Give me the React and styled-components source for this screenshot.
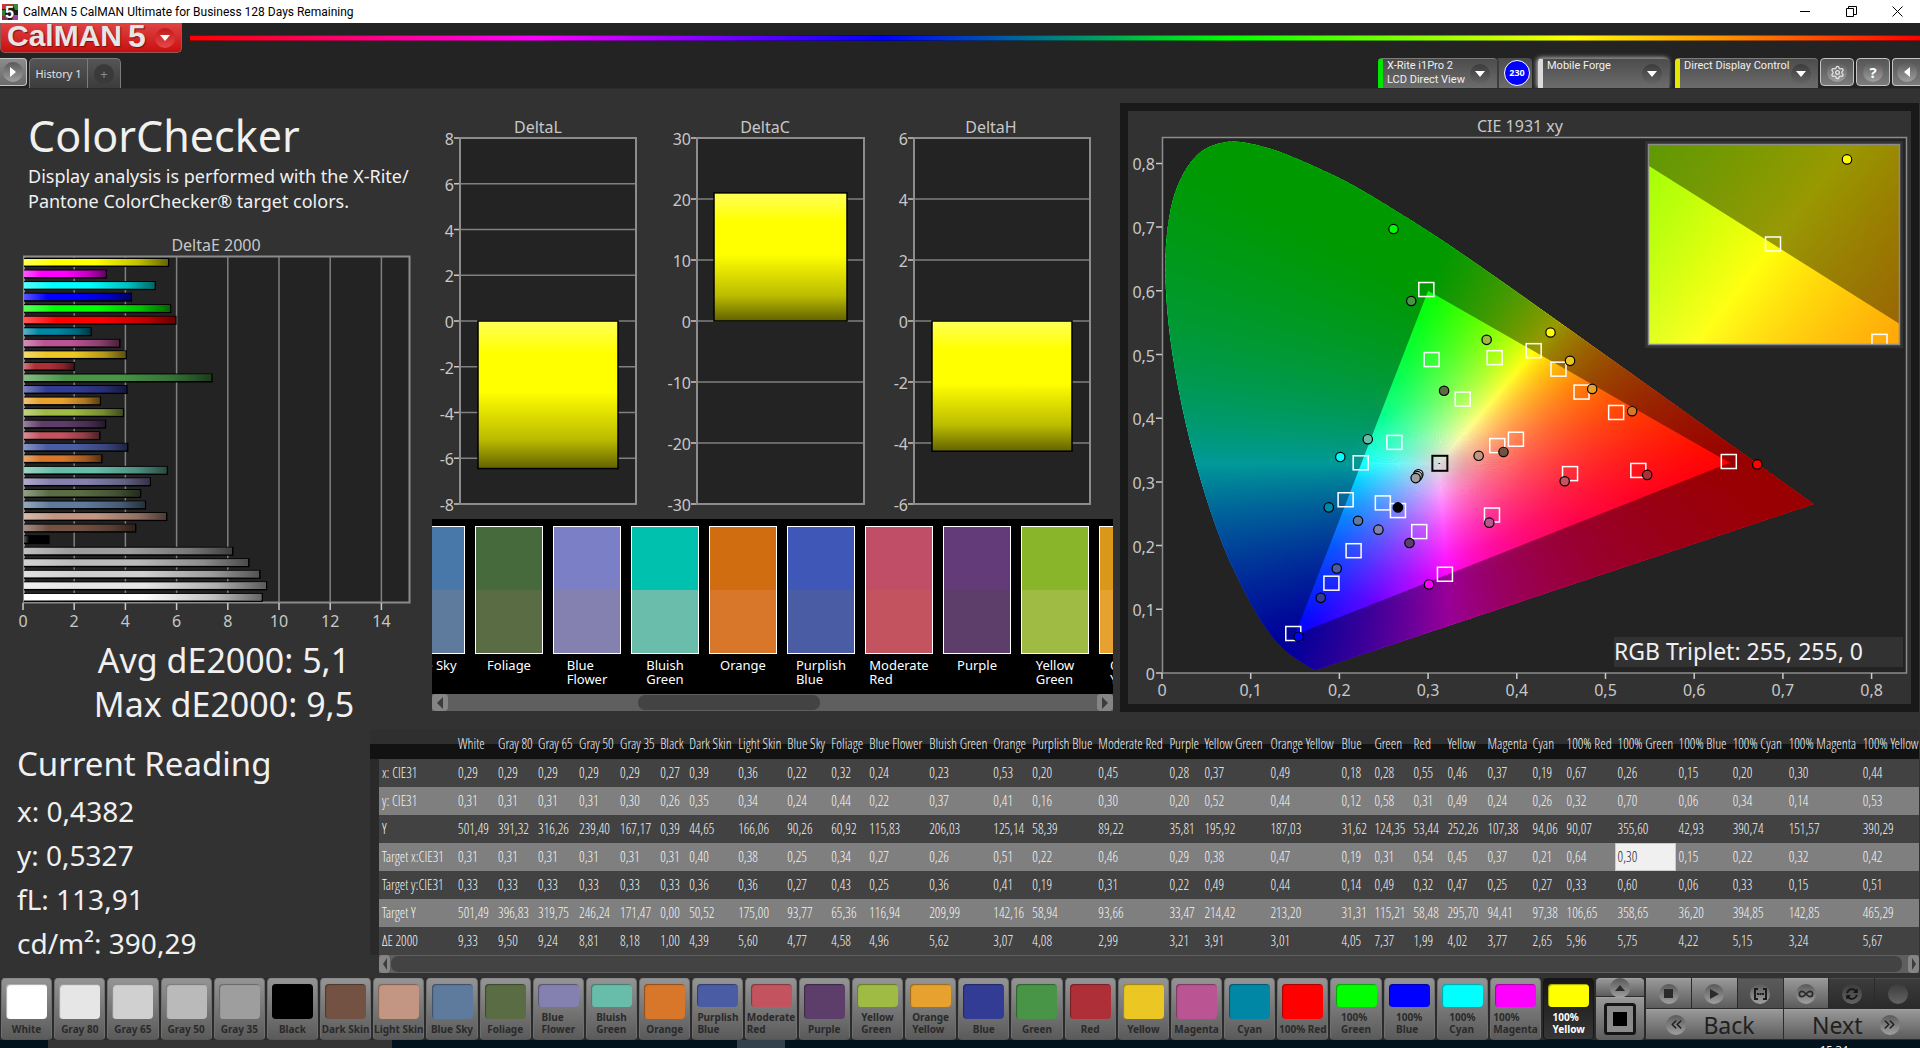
import React from "react";
import styled, { createGlobalStyle, css } from "styled-components";
import { ChevronsLeft, ChevronsRight, Infinity as Loop, Settings } from "lucide-react";
import { FaSyncAlt } from "react-icons/fa";

const UI_FONT = '"Noto Sans", "Open Sans", sans-serif';

// name, patch colour, deltaE, x, y, Y, target x, target y, target Y, column width
const PATCHES = [
    ["White", "#ffffff", "9,33", "0,29", "0,31", "501,49", "0,31", "0,33", "501,49", 40],
    ["Gray 80", "#e6e6e6", "9,50", "0,29", "0,31", "391,32", "0,31", "0,33", "396,83", 40],
    ["Gray 65", "#d0d0d0", "9,24", "0,29", "0,31", "316,26", "0,31", "0,33", "319,75", 41],
    ["Gray 50", "#bababa", "8,81", "0,29", "0,31", "239,40", "0,31", "0,33", "246,24", 41],
    ["Gray 35", "#9e9e9e", "8,18", "0,29", "0,30", "167,17", "0,31", "0,33", "171,47", 40],
    ["Black", "#000000", "1,00", "0,27", "0,26", "0,39", "0,31", "0,33", "0,00", 29],
    ["Dark Skin", "#735244", "4,39", "0,39", "0,35", "44,65", "0,40", "0,36", "50,52", 49],
    ["Light Skin", "#c29682", "5,60", "0,36", "0,34", "166,06", "0,38", "0,36", "175,00", 49],
    ["Blue Sky", "#5e7a9c", "4,77", "0,22", "0,24", "90,26", "0,25", "0,27", "93,77", 44],
    ["Foliage", "#596c43", "4,58", "0,32", "0,44", "60,92", "0,34", "0,43", "65,36", 38],
    ["Blue Flower", "#8480af", "4,96", "0,24", "0,22", "115,83", "0,27", "0,25", "116,94", 60],
    ["Bluish Green", "#67bda9", "5,62", "0,23", "0,37", "206,03", "0,26", "0,36", "209,99", 64],
    ["Orange", "#d87729", "3,07", "0,53", "0,41", "125,14", "0,51", "0,41", "142,16", 39],
    ["Purplish Blue", "#4a5ca4", "4,08", "0,20", "0,16", "58,39", "0,22", "0,19", "58,94", 66],
    ["Moderate Red", "#c2535f", "2,99", "0,45", "0,30", "89,22", "0,46", "0,31", "93,66", 71],
    ["Purple", "#5d3d69", "3,21", "0,28", "0,20", "35,81", "0,29", "0,22", "33,47", 35],
    ["Yellow Green", "#9fbb43", "3,91", "0,37", "0,52", "195,92", "0,38", "0,49", "214,42", 66],
    ["Orange Yellow", "#e7a12f", "3,01", "0,49", "0,44", "187,03", "0,47", "0,44", "213,20", 71],
    ["Blue", "#333c95", "4,05", "0,18", "0,12", "31,62", "0,19", "0,14", "31,31", 33],
    ["Green", "#489547", "7,37", "0,28", "0,58", "124,35", "0,31", "0,49", "115,21", 39],
    ["Red", "#af2f38", "1,99", "0,55", "0,31", "53,44", "0,54", "0,32", "58,48", 34],
    ["Yellow", "#ecc723", "4,02", "0,46", "0,49", "252,26", "0,45", "0,47", "295,70", 40],
    ["Magenta", "#ba5492", "3,77", "0,37", "0,24", "107,38", "0,37", "0,25", "94,41", 45],
    ["Cyan", "#0087a6", "2,65", "0,19", "0,26", "94,06", "0,21", "0,27", "97,38", 34],
    ["100% Red", "#ff0000", "5,96", "0,67", "0,32", "90,07", "0,64", "0,33", "106,65", 51],
    ["100% Green", "#00ff00", "5,75", "0,26", "0,70", "355,60", "0,30", "0,60", "358,65", 61],
    ["100% Blue", "#0000ff", "4,22", "0,15", "0,06", "42,93", "0,15", "0,06", "36,20", 54],
    ["100% Cyan", "#00ffff", "5,15", "0,20", "0,34", "390,74", "0,22", "0,33", "394,85", 56],
    ["100% Magenta", "#ff00ff", "3,24", "0,30", "0,14", "151,57", "0,32", "0,15", "142,85", 74],
    ["100% Yellow", "#ffff00", "5,67", "0,44", "0,53", "390,29", "0,42", "0,51", "465,29", 59],
].map(([name, color, dE, x, y, Y, tx, ty, tY, width]) => ({ name, color, dE, x, y, Y, tx, ty, tY, width }));

const ROWS = [
    ["x: CIE31", "x"],
    ["y: CIE31", "y"],
    ["Y", "Y"],
    ["Target x:CIE31", "tx"],
    ["Target y:CIE31", "ty"],
    ["Target Y", "tY"],
    ["ΔE 2000", "dE"],
];

const COMPARE = [
    ["Blue Sky", "#4878aa", "#5e7a9c"],
    ["Foliage", "#476a3d", "#596c43"],
    ["Blue Flower", "#7a7fc6", "#8480af"],
    ["Bluish Green", "#00c1ae", "#69bdaa"],
    ["Orange", "#d06d11", "#d87729"],
    ["Purplish Blue", "#3f58b8", "#4a5ca4"],
    ["Moderate Red", "#c04e66", "#c2535f"],
    ["Purple", "#633b79", "#5d3d69"],
    ["Yellow Green", "#88b529", "#9fbb43"],
    ["Orange Yellow", "#db9719", "#e7a12f"],
];

const toNumber = (text) => parseFloat(text.replace(",", "."));

/* ---------- DeltaE bar chart ---------- */

const DeltaEChart = () => {
    const x0 = 23;
    const unit = 25.6;
    const bars = [...PATCHES].reverse();
    return (
        <Chart viewBox="0 0 432 424" role="img" aria-label="DeltaE 2000">
            <defs>
                <linearGradient id="shade">
                    <stop offset="0" stopColor="#fff" stopOpacity="0.35" />
                    <stop offset="0.22" stopColor="#fff" stopOpacity="0" />
                    <stop offset="0.5" stopColor="#000" stopOpacity="0" />
                    <stop offset="0.8" stopColor="#000" stopOpacity="0.25" />
                    <stop offset="1" stopColor="#000" stopOpacity="0.6" />
                </linearGradient>
            </defs>
            <AxisText x="216" y="37" textAnchor="middle">DeltaE 2000</AxisText>
            <rect x="24" y="42.5" width="385.5" height="346" fill="#232323" stroke="#8c8c8c" strokeWidth="2" />
            {[0, 2, 4, 6, 8, 10, 12, 14].map((v) => (
                <g key={v}>
                    {v > 0 && <path d={`M${x0 + v * unit} 43V388`} stroke="#808080" strokeWidth="1.5" />}
                    <path d={`M${x0 + v * unit} 389v7`} stroke="#c8c8c8" strokeWidth="1.5" />
                    <AxisText x={x0 + v * unit} y="413" textAnchor="middle">{v}</AxisText>
                </g>
            ))}
            {bars.map((p, i) => {
                const y = 44 + i * 11.55;
                const w = toNumber(p.dE) * unit;
                return (
                    <g key={p.name}>
                        <rect x={x0 + 1} y={y} width={w} height="9" fill="#000" />
                        <rect x={x0 + 1} y={y + 1} width={w - 1.5} height="6.5" fill={p.color} />
                        <rect x={x0 + 1} y={y + 1} width={w - 1.5} height="6.5" fill="url(#shade)" />
                    </g>
                );
            })}
        </Chart>
    );
};

/* ---------- DeltaL / DeltaC / DeltaH ---------- */

const DeltaChart = ({ title, size, left, right, bar, max, step, value }) => {
    const top = 49;
    const bottom = 415;
    const toY = (v) => top + ((max - v) / (2 * max)) * (bottom - top);
    const ticks = [];
    for (let v = max; v >= -max; v -= step) ticks.push(v);
    const y1 = Math.min(toY(value), toY(0));
    const h = Math.abs(toY(value) - toY(0));
    return (
        <Chart viewBox={`0 0 ${size} 430`} role="img" aria-label={title}>
            <defs>
                <linearGradient id={"fill" + title} x1="0" y1="0" x2="0" y2="1">
                    <stop offset="0" stopColor="#ffff58" />
                    <stop offset="0.22" stopColor="#ffff00" />
                    <stop offset="0.48" stopColor="#ffff00" />
                    <stop offset="0.8" stopColor="#bcbc00" />
                    <stop offset="1" stopColor="#626200" />
                </linearGradient>
            </defs>
            <AxisText x={size / 2} y="44" textAnchor="middle">{title}</AxisText>
            <rect x={left} y={top} width={right - left} height={bottom - top} fill="#232323" />
            {ticks.map((v) => (
                <g key={v}>
                    <path d={`M${left} ${toY(v)}H${right}`} stroke="#808080" strokeWidth="1.5" />
                    <path d={`M${left - 6} ${toY(v)}h6`} stroke="#c8c8c8" strokeWidth="1.5" />
                    <AxisText x={left - 6} y={toY(v) + 7} textAnchor="end">{v}</AxisText>
                </g>
            ))}
            <rect x={left} y={top} width={right - left} height={bottom - top} fill="none" stroke="#8c8c8c" strokeWidth="2" />
            <rect x={bar} y={y1} width={right - (bar - left) - bar} height={h} fill={`url(#fill${title})`} stroke="#000" strokeWidth="1.5" />
        </Chart>
    );
};

/* ---------- CIE chromaticity ---------- */

const LOCUS = [
    [0.1741, 0.005], [0.1726, 0.0048], [0.1689, 0.0069], [0.1644, 0.0109], [0.1566, 0.0177], [0.144, 0.0297],
    [0.1355, 0.0399], [0.1241, 0.0578], [0.1096, 0.0868], [0.0913, 0.1327], [0.0687, 0.2007], [0.0454, 0.295],
    [0.0235, 0.4127], [0.0082, 0.5384], [0.0039, 0.6548], [0.0139, 0.7502], [0.0389, 0.812], [0.0743, 0.8338],
    [0.1142, 0.8262], [0.1547, 0.8059], [0.1929, 0.7816], [0.2296, 0.7543], [0.3016, 0.6923], [0.3731, 0.6245],
    [0.4441, 0.5547], [0.5125, 0.4866], [0.5752, 0.4242], [0.627, 0.3725], [0.6658, 0.334], [0.6915, 0.3083],
    [0.719, 0.2809], [0.7347, 0.2653],
];

const WHITE = [0.3127, 0.329];
const GAMUT = "M0.3 0.6L0.64 0.33L0.15 0.06Z";
const DIST = [0, 0.03, 0.06, 0.1, 0.14, 0.18, 0.23, 0.29, 0.36, 0.46, 0.6];

// Catmull-Rom through the spectral points, closed by the purple line
const locusPath = () => {
    let d = `M${LOCUS[0][0]} ${LOCUS[0][1]}`;
    for (let i = 0; i < LOCUS.length - 1; i++) {
        const p0 = LOCUS[Math.max(i - 1, 0)];
        const p1 = LOCUS[i];
        const p2 = LOCUS[i + 1];
        const p3 = LOCUS[Math.min(i + 2, LOCUS.length - 1)];
        const c1 = [p1[0] + (p2[0] - p0[0]) / 6, p1[1] + (p2[1] - p0[1]) / 6];
        const c2 = [p2[0] - (p3[0] - p1[0]) / 6, p2[1] - (p3[1] - p1[1]) / 6];
        d += `C${c1.join(" ")} ${c2.join(" ")} ${p2.join(" ")}`;
    }
    return d + "Z";
};
const LOCUS_PATH = locusPath();

const xyToRgb = (x, y) => {
    const z = 1 - x - y;
    const rgb = [
        3.2406 * x - 1.5372 * y - 0.4986 * z,
        -0.9689 * x + 1.8758 * y + 0.0415 * z,
        0.0557 * x - 0.204 * y + 1.057 * z,
    ].map((c) => Math.max(c, 0));
    const top = Math.max(...rgb);
    return `rgb(${rgb.map((c) => Math.round((c / top) * 255)).join(",")})`;
};

// Thin wedges round the white point, each one graded along its own ray
const Fan = ({ id, from, to, step }) => {
    const wedges = [];
    const reach = DIST[DIST.length - 1];
    const at = (deg, r) => {
        const a = (deg * Math.PI) / 180;
        return [WHITE[0] + Math.cos(a) * r, WHITE[1] + Math.sin(a) * r];
    };
    for (let deg = from; deg < to; deg += step) {
        const gid = id + wedges.length;
        const mid = deg + step / 2;
        const [x2, y2] = at(mid, reach);
        wedges.push(
            <g key={gid}>
                <linearGradient id={gid} gradientUnits="userSpaceOnUse" x1={WHITE[0]} y1={WHITE[1]} x2={x2} y2={y2}>
                    {DIST.map((r) => (
                        <stop key={r} offset={r / reach} stopColor={xyToRgb(...at(mid, r))} />
                    ))}
                </linearGradient>
                <path
                    d={`M${WHITE.join(" ")}L${at(deg, reach).join(" ")}L${at(deg + step * 1.8, reach).join(" ")}Z`}
                    fill={`url(#${gid})`}
                />
            </g>
        );
    }
    return (
        <g clipPath="url(#locus)">
            {wedges}
            <path d={LOCUS_PATH + GAMUT} fillRule="evenodd" fill="#000" opacity="0.4" />
        </g>
    );
};

const TARGETS = [
    [0.298, 0.602], [0.304, 0.492], [0.375, 0.495], [0.419, 0.506], [0.447, 0.477], [0.473, 0.441],
    [0.512, 0.409], [0.339, 0.43], [0.262, 0.362], [0.224, 0.33], [0.378, 0.357], [0.399, 0.367],
    [0.46, 0.313], [0.537, 0.318], [0.639, 0.332], [0.372, 0.248], [0.207, 0.272], [0.249, 0.267],
    [0.266, 0.255], [0.29, 0.222], [0.216, 0.192], [0.191, 0.141], [0.319, 0.155], [0.148, 0.062],
];

const READINGS = [
    [0.261, 0.697, "#00ff00"], [0.281, 0.584, "#489547"], [0.366, 0.523, "#9fbb43"], [0.438, 0.5345, "#ffff00"],
    [0.46, 0.49, "#ecc723"], [0.485, 0.446, "#e7a12f"], [0.53, 0.411, "#d87729"], [0.318, 0.443, "#596c43"],
    [0.232, 0.367, "#67bda9"], [0.201, 0.339, "#00ffff"], [0.357, 0.341, "#c29682"], [0.385, 0.347, "#735244"],
    [0.289, 0.312, "#e6e6e6"], [0.288, 0.309, "#bababa"], [0.286, 0.306, "#9e9e9e"], [0.454, 0.301, "#c2535f"],
    [0.547, 0.311, "#af2f38"], [0.671, 0.3275, "#ff0000"], [0.369, 0.236, "#ba5492"], [0.188, 0.26, "#0087a6"],
    [0.221, 0.239, "#5e7a9c"], [0.266, 0.26, "#000000"], [0.244, 0.225, "#8480af"], [0.279, 0.204, "#5d3d69"],
    [0.197, 0.164, "#4a5ca4"], [0.301, 0.139, "#ff00ff"], [0.179, 0.118, "#333c95"], [0.154, 0.057, "#0000ff"],
];

const Target = ({ cx, cy }) => (
    <rect x={cx - 7.5} y={cy - 7} width="15" height="14" fill="none" stroke="#fff" strokeWidth="1.5" />
);

const comma = (n) => (n === 0 ? "0" : n.toFixed(1).replace(".", ","));

const CieChart = () => {
    const X = (x) => 34 + x * 887;
    const Y = (y) => 562 - y * 637;
    // zoomed view round the yellow target
    const ZX = (x) => 645 + (x - 0.4193) * 3915;
    const ZY = (y) => 133 - (y - 0.5053) * 3110;
    return (
        <Chart viewBox="0 0 783 593" role="img" aria-label="CIE 1931 xy">
            <defs>
                <clipPath id="locus"><path d={LOCUS_PATH} /></clipPath>
                <clipPath id="lens"><rect x="521" y="34" width="250" height="199" /></clipPath>
            </defs>
            <AxisText x="392" y="21" textAnchor="middle">CIE 1931 xy</AxisText>
            <rect x="34.5" y="26.5" width="744" height="535.5" fill="#232323" stroke="#8c8c8c" strokeWidth="1.5" />
            {[0, 0.1, 0.2, 0.3, 0.4, 0.5, 0.6, 0.7, 0.8].map((v) => (
                <g key={v}>
                    <path d={`M${X(v)} 562v6M28 ${Y(v)}h6`} stroke="#c8c8c8" strokeWidth="1.5" />
                    <AxisText x={X(v)} y="585" textAnchor="middle">{comma(v)}</AxisText>
                    <AxisText x="27" y={Y(v) + 7} textAnchor="end">{comma(v)}</AxisText>
                </g>
            ))}
            <g transform="translate(34 562) scale(887 -637)">
                <Fan id="hue" from={0} to={360} step={1} />
            </g>
            {TARGETS.map(([x, y]) => <Target key={x + "-" + y} cx={X(x)} cy={Y(y)} />)}
            <rect x={X(0.3127) - 7} y={Y(0.33) - 7} width="15" height="15" fill="none" stroke="#000" strokeWidth="2" />
            {READINGS.map(([x, y, color]) => (
                <circle key={x + "-" + y} cx={X(x)} cy={Y(y)} r="4.7" fill={color} stroke="#000" strokeWidth="1.2" />
            ))}
            <rect x="517" y="30" width="258" height="207" fill="#323232" />
            <g clipPath="url(#lens)">
                <g transform={`translate(${ZX(0)} ${ZY(0)}) scale(3915 -3110)`}>
                    <Fan id="lens-hue" from={40} to={76} step={0.25} />
                </g>
                <Target cx={ZX(0.4193)} cy={ZY(0.5053)} />
                <Target cx={ZX(0.4465)} cy={ZY(0.4740)} />
                <circle cx={ZX(0.4382)} cy={ZY(0.5325)} r="4.7" fill="#ff0" stroke="#000" strokeWidth="1.2" />
            </g>
            <rect x="520.5" y="33.5" width="251" height="200" fill="none" stroke="#8c8c8c" strokeWidth="1.5" />
            <rect x="486" y="526" width="289" height="30" fill="#323232" />
            <Triplet x="486" y="549">RGB Triplet: 255, 255, 0</Triplet>
        </Chart>
    );
};

/* ---------- page ---------- */

const Round = ({ children, dim }) => <Knob $dim={dim}>{children}</Knob>;

const Caret = () => (
    <svg width="12" height="6" viewBox="0 0 12 6" aria-hidden="true"><path d="M1 0h10L6 6z" fill="#fff" /></svg>
);

const App = () => {
    return (
        <Page>
            <GlobalStyle />
            <TitleBar>
                <svg width="16" height="16" viewBox="0 0 16 16" aria-hidden="true">
                    <rect width="16" height="16" fill="#1c1c1c" />
                    <path d="M0 0h4v5H0z" fill="#c33" />
                    <path d="M4 0h7v2H4z" fill="#a6432f" />
                    <path d="M11 0h5v6h-3z" fill="#2f8f3a" />
                    <path d="M0 6h3v6H0z" fill="#3d7a35" />
                    <path d="M0 12h6v4H0z" fill="#8a2f4a" />
                    <path d="M12 11h4v5h-6z" fill="#a03fb0" />
                    <LogoDigit x="3" y="14">5</LogoDigit>
                </svg>
                <WindowTitle>CalMAN 5 CalMAN Ultimate for Business 128 Days Remaining</WindowTitle>
                <WindowButton aria-label="Minimize">
                    <svg width="11" height="11"><path d="M0 5.5h10" stroke="#000" /></svg>
                </WindowButton>
                <WindowButton aria-label="Restore">
                    <svg width="11" height="11" fill="none" stroke="#000"><path d="M.5 2.5h7v8h-7zM2.5 2.5v-2h8v8h-3" /></svg>
                </WindowButton>
                <WindowButton aria-label="Close">
                    <svg width="11" height="11" stroke="#000"><path d="M.5.5l10 10M10.5.5l-10 10" /></svg>
                </WindowButton>
            </TitleBar>

            <BrandRow>
                <Brand>
                    <BrandName>CalMAN</BrandName>
                    <BrandDigit>5</BrandDigit>
                    <BrandKnob><Caret /></BrandKnob>
                </Brand>
                <Rainbow />
            </BrandRow>

            <TabRow>
                <EdgeButton aria-label="Expand">
                    <Round><svg width="8" height="10"><path d="M1 0l6 5-6 5z" fill="#fff" /></svg></Round>
                </EdgeButton>
                <Tab>History 1</Tab>
                <AddTab aria-label="Add tab"><Plus>+</Plus></AddTab>
                <Spacer />
                <Device $color="#00e600" $width={119}>
                    <DeviceText>X-Rite i1Pro 2<br />LCD Direct View</DeviceText>
                    <Round dim><Caret /></Round>
                </Device>
                <Badge><BadgeDot>230</BadgeDot></Badge>
                <Device $color="#dcdcdc" $width={131} $glow>
                    <DeviceText>Mobile Forge</DeviceText>
                    <Round dim><Caret /></Round>
                </Device>
                <Device $color="#e6e600" $width={143}>
                    <DeviceText>Direct Display Control</DeviceText>
                    <Round dim><Caret /></Round>
                </Device>
                <ToolButton aria-label="Settings"><Round><Settings size={15} color="#e6e6e6" /></Round></ToolButton>
                <ToolButton aria-label="Help"><Round>?</Round></ToolButton>
                <LastTool aria-label="Collapse">
                    <Round><svg width="8" height="10"><path d="M7 0L1 5l6 5z" fill="#fff" /></svg></Round>
                </LastTool>
            </TabRow>

            <Main>
                <Upper>
                    <Left>
                        <Heading>ColorChecker</Heading>
                        <Intro>Display analysis is performed with the X-Rite/<br />Pantone ColorChecker® target colors.</Intro>
                        <DeltaEChart />
                        <Summary>Avg dE2000: 5,1</Summary>
                        <Summary>Max dE2000: 9,5</Summary>
                    </Left>
                    <Middle>
                        <Deltas>
                            <DeltaChart title="DeltaL" size={212} left={28} right={204} bar={46} max={8} step={2} value={-6.45} />
                            <DeltaChart title="DeltaC" size={242} left={53} right={220} bar={70} max={30} step={10} value={21} />
                            <DeltaChart title="DeltaH" size={210} left={28} right={204} bar={46} max={6} step={2} value={-4.27} />
                        </Deltas>
                        <Strip>
                            <Reel>
                                {COMPARE.map(([name, measured, target]) => (
                                    <Pair key={name}>
                                        <PairColor $top={measured} $bottom={target} />
                                        <PairLabel $wrap={name.length > 8}>{name}</PairLabel>
                                    </Pair>
                                ))}
                            </Reel>
                        </Strip>
                        <ScrollBar>
                            <ScrollButton aria-label="Scroll left">
                                <svg width="6" height="12"><path d="M6 0v12L0 6z" fill="#3c3c3c" /></svg>
                            </ScrollButton>
                            <ScrollTrack $before={190} $thumb={182} $after={277}><i /></ScrollTrack>
                            <ScrollButton aria-label="Scroll right">
                                <svg width="6" height="12"><path d="M0 0v12l6-6z" fill="#3c3c3c" /></svg>
                            </ScrollButton>
                        </ScrollBar>
                    </Middle>
                    <Cie><CieChart /></Cie>
                </Upper>

                <Lower>
                    <Reading>
                        <ReadingTitle>Current Reading</ReadingTitle>
                        <ReadingLine>x: 0,4382</ReadingLine>
                        <ReadingLine>y: 0,5327</ReadingLine>
                        <ReadingLine>fL: 113,91</ReadingLine>
                        <ReadingLine>cd/m²: 390,29</ReadingLine>
                    </Reading>
                    <TableBox>
                        <Table>
                            <colgroup>
                                <col width="9" />
                                <col width="76" />
                                {PATCHES.map((p) => <col key={p.name} width={p.width} />)}
                            </colgroup>
                            <thead>
                                <tr>
                                    <th />
                                    <th />
                                    {PATCHES.map((p) => <th key={p.name} scope="col">{p.name}</th>)}
                                </tr>
                            </thead>
                            <tbody>
                                {ROWS.map(([label, key]) => (
                                    <tr key={key}>
                                        <Gutter />
                                        <th scope="row">{label}</th>
                                        {PATCHES.map((p) => (
                                            <Cell key={p.name} $active={key === "tx" && p.name === "100% Green"}>{p[key]}</Cell>
                                        ))}
                                    </tr>
                                ))}
                            </tbody>
                        </Table>
                        <TableScroll>
                            <ScrollButton $slim aria-label="Scroll left">
                                <svg width="4" height="12"><path d="M4 0v12L0 6z" fill="#3c3c3c" /></svg>
                            </ScrollButton>
                            <ScrollTrack $before={1} $thumb={1510} $after={6}><i /></ScrollTrack>
                            <ScrollButton $slim aria-label="Scroll right">
                                <svg width="4" height="12"><path d="M0 0v12l4-6z" fill="#3c3c3c" /></svg>
                            </ScrollButton>
                        </TableScroll>
                    </TableBox>
                </Lower>
            </Main>

            <Dock>
                <Patches>
                    {PATCHES.map((p) => (
                        <PatchButton key={p.name} $active={p.name === "100% Yellow"}>
                            <PatchColor $color={p.color} />
                            <PatchLabel $wrap={p.width > 52}>{p.name}</PatchLabel>
                        </PatchButton>
                    ))}
                </Patches>
                <WindowMode>
                    <UpButton aria-label="Up"><Round><svg width="10" height="6"><path d="M0 6h10L5 0z" fill="#2b2b2b" /></svg></Round></UpButton>
                    <PatternButton aria-label="Pattern window">
                        <svg width="32" height="32">
                            <rect x="1.5" y="1.5" width="29" height="29" rx="2" fill="#8a8a8a" stroke="#161616" strokeWidth="3" />
                            <rect x="9" y="9" width="14" height="14" fill="#000" />
                        </svg>
                    </PatternButton>
                </WindowMode>
                <Transport>
                    <MediaButton aria-label="Stop"><Round><svg width="9" height="9"><path d="M0 0h9v9H0z" fill="#2b2b2b" /></svg></Round></MediaButton>
                    <MediaButton aria-label="Play"><Round><svg width="9" height="10"><path d="M0 0l9 5-9 5z" fill="#2b2b2b" /></svg></Round></MediaButton>
                    <MediaButton $tone="mid" aria-label="Range">
                        <Round>
                            <svg width="13" height="12" fill="none" stroke="#1c1c1c" strokeWidth="2">
                                <path d="M4 1H1v10h3M9 1h3v10H9M3 6h2M5.500 6h2M8 6h2" />
                            </svg>
                        </Round>
                    </MediaButton>
                    <MediaButton aria-label="Loop"><Round><Loop size={16} color="#2b2b2b" strokeWidth={2.5} /></Round></MediaButton>
                    <MediaButton $tone="dark" aria-label="Refresh"><Round dim><FaSyncAlt size={12} color="#161616" /></Round></MediaButton>
                    <MediaButton $tone="dark" aria-label="Record"><Round dim /></MediaButton>
                    <BackButton><Round><ChevronsLeft size={17} color="#1c1c1c" /></Round>Back</BackButton>
                    <NextButton>Next<Round><ChevronsRight size={17} color="#1c1c1c" /></Round></NextButton>
                </Transport>
            </Dock>
            <TaskBar>
                <TaskItem $grow={344} $color="#343434" />
                <TaskGap />
                <TaskItem $grow={48} $color="#33414d" />
                <Clock>15:34</Clock>
            </TaskBar>
        </Page>
    );
};

export default App;

const GlobalStyle = createGlobalStyle`
    *{
        box-sizing: border-box;
    }
    body{
        margin: 0;
        background-color: #232323;
        font-family: ${UI_FONT};
        overflow: hidden;
    }
    button{
        font-family: inherit;
        padding: 0;
        border: none;
        cursor: pointer;
    }
    svg{
        display: block;
        flex-shrink: 0;
    }
`

const Page = styled.div`
    min-height: 100vh;
    display: flex;
    flex-direction: column;
    background-color: #232323;
    color: #f0f0f0;
`

const TitleBar = styled.div`
    height: 23px;
    background-color: white;
    color: black;
    display: flex;
    align-items: center;
    padding-left: 2px;
`

const WindowTitle = styled.span`
    flex: 1;
    font-family: Roboto, sans-serif;
    font-size: 12px;
    line-height: 18px;
    padding-left: 5px;
`

const LogoDigit = styled.text`
    font-family: "Liberation Sans", sans-serif;
    font-weight: bold;
    font-size: 16px;
    fill: white;
`

const WindowButton = styled.button`
    width: 46px;
    height: 18px;
    background: none;
    display: flex;
    justify-content: center;
    align-items: center;
`

const BrandRow = styled.div`
    height: 35px;
    display: flex;
    align-items: flex-start;
    gap: 8px;
`

const Brand = styled.button`
    width: 182px;
    height: 30px;
    padding: 0 6px;
    border: 1px solid #8e5a5a;
    border-top: none;
    border-radius: 0 0 5px 5px;
    background: linear-gradient(#e04444, #c90f0f);
    display: flex;
    align-items: center;
    gap: 6px;
`

const silver = css`
    font-family: "Liberation Sans", sans-serif;
    font-weight: bold;
    line-height: 26px;
    color: #e6e6e6;
    text-shadow: 1px 1px 1px #7c1010;
    align-self: flex-start;
`

const BrandName = styled.span`
    ${silver}
    font-size: 30px;
`

const BrandDigit = styled.span`
    ${silver}
    font-size: 32px;
    flex: 1;
    text-align: left;
`

const BrandKnob = styled.span`
    width: 20px;
    height: 20px;
    border-radius: 50%;
    background: linear-gradient(#c01a1a, #e84848);
    display: flex;
    justify-content: center;
    align-items: center;
`

const Rainbow = styled.div`
    flex: 1;
    height: 6px;
    margin-top: 12px;
    background: linear-gradient(90deg, #ff0000, #ff00ff 20%, #0000ff 40%, #00ff00 60%, #ffff00 80%, #ff0000);
    border-top: 1px solid rgba(0, 0, 0, 0.4);
    border-bottom: 1px solid rgba(0, 0, 0, 0.4);
`

const TabRow = styled.div`
    height: 30px;
    display: flex;
    align-items: flex-start;
`

const Spacer = styled.div`
    flex: 1;
`

const Knob = styled.span`
    width: 20px;
    height: 20px;
    flex-shrink: 0;
    border-radius: 50%;
    background: ${(p) => (p.$dim ? "linear-gradient(#3c3c3c, #646464)" : "linear-gradient(#5a5a5a, #a0a0a0)")};
    color: white;
    font-size: 15px;
    line-height: 20px;
    font-weight: bold;
    display: flex;
    justify-content: center;
    align-items: center;
`

const EdgeButton = styled.button`
    width: 27px;
    height: 28px;
    border: 1px solid #c4c4c4;
    border-left: none;
    border-radius: 0 4px 4px 0;
    background: linear-gradient(#8c8c8c, #6a6a6a);
    display: flex;
    align-items: center;
    justify-content: center;
    margin-right: 2px;
`

const Tab = styled.button`
    width: 59px;
    height: 30px;
    border: 1px solid #7c7c7c;
    border-bottom: none;
    border-radius: 5px 0 0 0;
    background: linear-gradient(#555, #3c3c3c);
    color: #e2e2e2;
    font-size: 11px;
`

const AddTab = styled.button`
    width: 33px;
    height: 30px;
    border: 1px solid #7c7c7c;
    border-left: none;
    border-bottom: none;
    border-radius: 0 5px 0 0;
    background: linear-gradient(#555, #3c3c3c);
    display: flex;
    align-items: center;
    justify-content: center;
`

const Plus = styled.span`
    width: 20px;
    height: 20px;
    border-radius: 50%;
    background-color: #3a3a3a;
    color: #8c8c8c;
    line-height: 20px;
    font-size: 13px;
`

const Device = styled.button`
    width: ${(p) => p.$width}px;
    height: 30px;
    padding: 0 7px 0 4px;
    border-left: 5px solid ${(p) => p.$color};
    border-top: 1px solid #7c7c7c;
    border-radius: 4px 4px 0 0;
    background: linear-gradient(#4c4c4c, #6c6c6c);
    box-shadow: ${(p) => (p.$glow ? "-1px 0 5px #d0d0d0" : "none")};
    margin-left: 6px;
    color: #f0f0f0;
    display: flex;
    align-items: center;
    justify-content: space-between;
`

const DeviceText = styled.span`
    min-width: 0;
    align-self: flex-start;
    text-align: left;
    white-space: nowrap;
    font-family: Roboto, sans-serif;
    font-size: 11px;
    line-height: 14px;
`

const Badge = styled.div`
    width: 35px;
    height: 30px;
    border-left: 2px solid #3c3c3c;
    background: linear-gradient(#4c4c4c, #6c6c6c);
    border-radius: 0 4px 0 0;
    display: flex;
    align-items: center;
    justify-content: flex-end;
    padding-right: 2px;
`

const BadgeDot = styled.span`
    width: 26px;
    height: 26px;
    border: 1px solid white;
    border-radius: 50%;
    background-color: #0000ff;
    color: white;
    font-size: 9px;
    line-height: 24px;
    font-weight: bold;
    text-align: center;
`

const ToolButton = styled.button`
    width: 34px;
    height: 28px;
    margin-left: 2px;
    border: 1px solid #c4c4c4;
    border-radius: 4px;
    background: linear-gradient(#555, #7c7c7c);
    display: flex;
    align-items: center;
    justify-content: center;
`

const LastTool = styled(ToolButton)`
    width: 28px;
    border-right: none;
    border-radius: 4px 0 0 4px;
`

const Main = styled.main`
    flex: 1;
    background-color: #323232;
    border-top: 1px solid #2b2b2b;
`

const Upper = styled.div`
    display: grid;
    grid-template-columns: 432fr 681fr 807fr;
    align-items: start;
    padding-bottom: 3px;
`

const Left = styled.section`
    min-width: 0;
    padding-top: 23px;
`

const Heading = styled.h1`
    margin: 0 0 4px;
    padding-left: 28px;
    font-size: 43px;
    line-height: 48px;
    font-weight: normal;
`

const Intro = styled.p`
    margin: 0;
    padding-left: 28px;
    font-size: 18px;
    line-height: 25px;
    white-space: nowrap;
`

const Summary = styled.p`
    margin: 0;
    padding-left: 16px;
    text-align: center;
    font-size: 34px;
    line-height: 44px;
`

const Chart = styled.svg`
    width: 100%;
    height: auto;
`

const AxisText = styled.text`
    font-family: ${UI_FONT};
    font-size: 16px;
    fill: #c8c8c8;
`

const Triplet = styled.text`
    font-family: ${UI_FONT};
    font-size: 23px;
    fill: #f0f0f0;
`

const Middle = styled.section`
    min-width: 0;
`

const Deltas = styled.div`
    display: grid;
    grid-template-columns: 212fr 242fr 210fr;
    padding-right: 17px;
`

const Strip = styled.div`
    height: 175px;
    padding-top: 7px;
    background-color: black;
    overflow: hidden;
`

const Reel = styled.div`
    display: flex;
    gap: 10px;
    margin-left: -35px;
`

const Pair = styled.figure`
    margin: 0;
    flex: 0 0 68px;
    display: flex;
    flex-direction: column;
    align-items: center;
    gap: 4px;
`

const PairColor = styled.div`
    width: 68px;
    height: 128px;
    border: 1px solid white;
    background: linear-gradient(${(p) => p.$top} 50%, ${(p) => p.$bottom} 50%);
`

const PairLabel = styled.figcaption`
    font-size: 13px;
    line-height: 14px;
    color: white;
    width: ${(p) => (p.$wrap ? "min-content" : "auto")};
`

const ScrollBar = styled.div`
    height: 17px;
    background-color: #5f5f5f;
    display: flex;
`

const TableScroll = styled(ScrollBar)`
    height: 18px;
    margin-left: 9px;
`

const ScrollButton = styled.button`
    width: ${(p) => (p.$slim ? 11 : 16)}px;
    border-radius: 4px;
    background-color: #858585;
    display: flex;
    justify-content: center;
    align-items: center;
`

const ScrollTrack = styled.div`
    flex: 1;
    padding: 1px 0;
    display: grid;
    grid-template-columns: ${(p) => p.$before}fr ${(p) => p.$thumb}fr ${(p) => p.$after}fr;
    i{
        grid-column: 2;
        border-radius: 7px;
        background-color: #434343;
    }
`

const Cie = styled.section`
    margin: 14px 1px 0 7px;
    padding: 8px;
    background-color: #191919;
    > svg{
        background-color: #323232;
    }
`

const Lower = styled.div`
    display: grid;
    grid-template-columns: 370fr 1549fr 1fr;
    align-items: start;
`

const Reading = styled.section`
    padding: 12px 0 0 17px;
`

const ReadingTitle = styled.h2`
    margin: 0 0 2px;
    font-size: 33px;
    line-height: 46px;
    font-weight: normal;
`

const ReadingLine = styled.p`
    margin: 0;
    font-size: 28px;
    line-height: 44px;
`

const TableBox = styled.div`
    min-width: 0;
    overflow: hidden;
`

const Table = styled.table`
    width: 100%;
    table-layout: fixed;
    border-collapse: collapse;
    font-family: "Open Sans Condensed Light", "Roboto Condensed", "Noto Sans Condensed", Roboto, sans-serif;
    font-size: 14px;
    line-height: 16px;
    color: #f4f4f4;
    th, td{
        padding: 0 0 0 3px;
        text-align: left;
        font-weight: normal;
        white-space: nowrap;
    }
    thead tr{
        height: 30px;
        background: linear-gradient(#2f2f2f 50%, #121212 50%);
    }
    tbody tr{
        height: 28px;
        background-color: #424242;
    }
    tbody tr:nth-child(even){
        background-color: #7f7f7f;
    }
`

const Gutter = styled.td`
    background-color: #2a2a2a;
`

const Cell = styled.td`
    ${(p) => p.$active && css`
        background-color: #f0f0f0;
        color: #222;
        box-shadow: inset 0 0 0 1px #ccc;
    `}
`

const Dock = styled.footer`
    height: 62px;
    display: flex;
    gap: 2px;
    background-color: #2b2b2b;
`

const Patches = styled.div`
    flex: 1595;
    min-width: 0;
    padding-left: 1px;
    display: grid;
    grid-template-columns: repeat(30, minmax(0, 1fr));
    gap: 2px;
`

const PatchButton = styled.button`
    padding: 5px 0 4px;
    border: 1px solid #6f6f6f;
    border-color: ${(p) => (p.$active ? "#161616" : "#8a8a8a #6f6f6f #555")};
    border-radius: 4px;
    background: ${(p) => (p.$active ? "linear-gradient(#161616, #363636)" : "linear-gradient(#949494, #5a5a5a)")};
    color: ${(p) => (p.$active ? "white" : "#2a2a2a")};
    display: flex;
    flex-direction: column;
    align-items: center;
    gap: 4px;
`

const PatchColor = styled.span`
    flex: 1;
    width: 41px;
    border-radius: 4px;
    background-color: ${(p) => p.$color};
    box-shadow: inset 1px 1px 1px rgba(0, 0, 0, 0.35);
`

const PatchLabel = styled.span`
    width: ${(p) => (p.$wrap ? "min-content" : "auto")};
    white-space: ${(p) => (p.$wrap ? "normal" : "nowrap")};
    text-align: left;
    font-size: 10px;
    line-height: 12px;
    font-weight: bold;
`

const WindowMode = styled.div`
    flex: 48;
    display: flex;
    flex-direction: column;
    gap: 1px;
`

const face = css`
    border-top: 1px solid #a2a2a2;
    background: linear-gradient(#989898, #5c5c5c);
    display: flex;
    align-items: center;
    justify-content: center;
`

const UpButton = styled.button`
    ${face}
    height: 18px;
    border-radius: 4px 4px 0 0;
`

const PatternButton = styled.button`
    ${face}
    flex: 1;
    border-radius: 0 0 4px 4px;
`

const Transport = styled.div`
    flex: 274;
    display: grid;
    grid-template-columns: repeat(6, 1fr);
    grid-template-rows: 30px 30px;
    gap: 1px;
`

const TONES = {
    mid: "linear-gradient(#5a5a5a, #4a4a4a)",
    dark: "linear-gradient(#3c3c3c, #2a2a2a)",
};

const MediaButton = styled.button`
    ${face}
    ${(p) => p.$tone && css`
        border-top-color: #4c4c4c;
        background: ${TONES[p.$tone]};
    `}
`

const NavButton = styled.button`
    ${face}
    grid-column: span 3;
    gap: 17px;
    font-size: 23px;
    line-height: 28px;
    color: #1f1f1f;
`

const BackButton = styled(NavButton)`
    padding-right: 8px;
`

const NextButton = styled(NavButton)`
    padding-left: 8px;
`

const TaskBar = styled.div`
    height: 8px;
    padding-left: 48px;
    overflow: hidden;
    background-color: #02131d;
    display: flex;
`

const TaskItem = styled.div`
    width: ${(p) => p.$grow}px;
    background-color: ${(p) => p.$color};
`

const TaskGap = styled.div`
    width: 345px;
`

const Clock = styled.time`
    margin: 4px 72px 0 auto;
    font-size: 11px;
    line-height: 12px;
    color: white;
`
